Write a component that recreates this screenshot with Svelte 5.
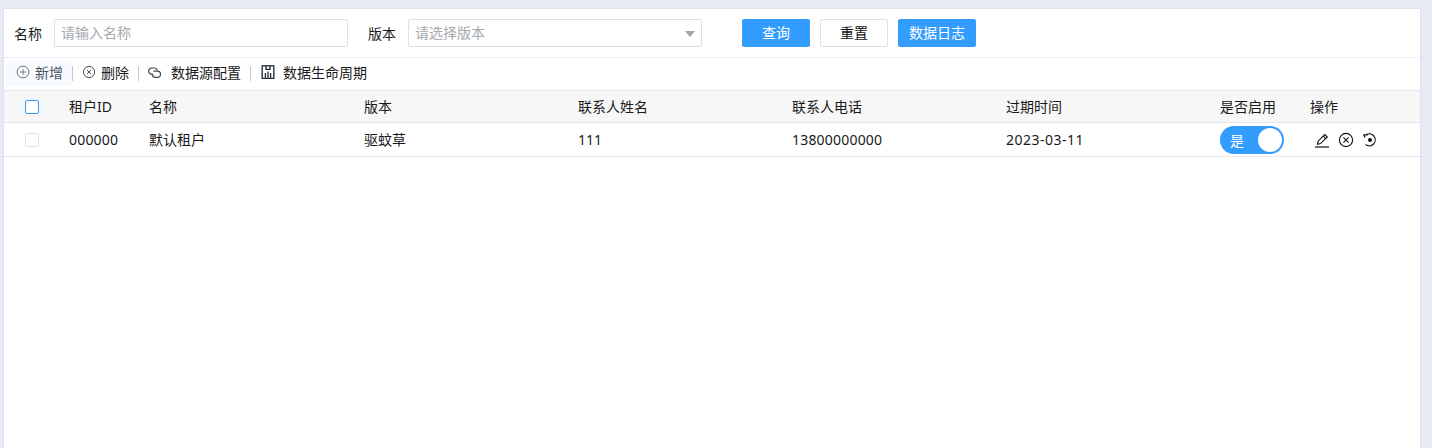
<script>
    const columns = [
        { key: 'id', title: '租户ID', width: 80, cls: 'num' },
        { key: 'name', title: '名称', width: 215, cls: '' },
        { key: 'version', title: '版本', width: 214, cls: '' },
        { key: 'contact', title: '联系人姓名', width: 214, cls: '' },
        { key: 'phone', title: '联系人电话', width: 214, cls: 'num' },
        { key: 'expire', title: '过期时间', width: 214, cls: 'date' }
    ];
    const rows = [
        { id: '000000', name: '默认租户', version: '驱蚊草', contact: '111', phone: '13800000000', expire: '2023-03-11' }
    ];
</script>

<div class="page">
    <div class="panel">
        <form class="search">
            <span class="label">名称</span>
            <div class="input name-input">请输入名称</div>
            <span class="label version-label">版本</span>
            <div class="input version-input">
                请选择版本
                <i class="caret"></i>
            </div>
            <button type="button" class="btn primary query">查询</button>
            <button type="button" class="btn reset">重置</button>
            <button type="button" class="btn primary log">数据日志</button>
        </form>

        <div class="toolbar">
            <button type="button" class="tool add">
                <svg width="14" height="14" viewBox="0 0 14 14" fill="none" stroke="#6f7680">
                    <circle cx="7" cy="7" r="5.9" />
                    <path d="M7 4.2v5.6M4.2 7h5.6" />
                </svg>
                <span class="grey">新增</span>
            </button>
            <i class="sep"></i>
            <button type="button" class="tool del">
                <svg width="14" height="14" viewBox="0 0 14 14" fill="none" stroke="#4a4f57">
                    <circle cx="7" cy="7" r="5.6" />
                    <path d="M5 5l4 4M9 5l-4 4" />
                </svg>
                <span>删除</span>
            </button>
            <i class="sep"></i>
            <button type="button" class="tool source">
                <svg width="14" height="14" viewBox="0 0 14 14" fill="none" stroke="#3f464f" stroke-width="1.2">
                    <path d="M5.2 9.4H4a3.2 3.2 0 0 1-.2-6.4h2.6a3.2 3.2 0 0 1 3 2.4" />
                    <path d="M5.4 6.2h4a3.1 3.1 0 0 1 0 6.2H7.2a3 3 0 0 1-2.8-2.6" />
                </svg>
                <span>数据源配置</span>
            </button>
            <i class="sep"></i>
            <button type="button" class="tool life">
                <svg width="14" height="14" viewBox="0 0 14 14" fill="none" stroke="#1d2733" stroke-width="1.3">
                    <rect x="1.2" y="0.8" width="11.6" height="12.6" />
                    <path d="M5 1v3.4h4V1M4.4 12.8V8M7 12.8V6.6M9.6 12.8V8" />
                </svg>
                <span>数据生命周期</span>
            </button>
        </div>

        <div class="row head">
            <div class="check-cell"><span class="check active"></span></div>
            {#each columns as col}
                <div class="cell" style="width: {col.width}px">{col.title}</div>
            {/each}
            <div class="cell enable">是否启用</div>
            <div class="cell">操作</div>
        </div>

        {#each rows as row}
            <div class="row body">
                <div class="check-cell"><span class="check"></span></div>
                {#each columns as col}
                    <div class="cell {col.cls}" style="width: {col.width}px">{row[col.key]}</div>
                {/each}
                <div class="cell enable">
                    <span class="switch">
                        <span>是</span>
                        <i class="knob"></i>
                    </span>
                </div>
                <div class="cell actions">
                    <svg width="16" height="16" viewBox="0 0 16 16" fill="none" stroke="#111" stroke-width="1.1">
                        <path d="M1 15h14" stroke-width="1.2" />
                        <path d="M3.5 12.2l.6-3L10.8 2.6l2.5 2.4-6.7 6.6z" />
                        <path d="M9.2 4.2l2.5 2.4" />
                    </svg>
                    <svg width="16" height="16" viewBox="0 0 16 16" fill="none" stroke="#111" stroke-width="1.1">
                        <circle cx="8" cy="8" r="6.6" />
                        <path d="M5.4 5.4l5.2 5.2M10.6 5.4l-5.2 5.2" />
                    </svg>
                    <svg width="16" height="16" viewBox="0 0 16 16" fill="none" stroke="#111" stroke-width="1.2">
                        <path d="M1.5 2.8h4.2M1.5 2.8l1.6 2.6M4 2.8A6 6 0 1 1 3.6 12.6" />
                        <circle cx="8" cy="8" r="2" fill="#111" stroke="none" />
                    </svg>
                </div>
            </div>
        {/each}
    </div>
</div>

<style>
:global(body) {
    margin: 0;
    background: #e6ebf3;
}

.page {
    height: 448px;
    padding: 9px 12px 0 4px;
    box-sizing: border-box;
    overflow: hidden;
    font-family: "Noto Sans", "Noto Sans CJK SC", sans-serif;
    font-size: 14px;
    color: #1a1a1a;
}

.panel {
    height: 439px;
    background: #fff;
    box-shadow: 0 0 0 1px #dfe3e9;
}

.search {
    display: flex;
    align-items: center;
    height: 49px;
    padding: 0 0 1px 10px;
    border-bottom: 1px dotted #dcdfe6;
    box-sizing: border-box;
}

.label {
    width: 40px;
    flex: none;
}

.version-label {
    margin-left: 20px;
}

.input {
    height: 28px;
    line-height: 26px;
    padding: 0 6px;
    box-sizing: border-box;
    border: 1px solid #dcdfe6;
    border-radius: 2px;
    color: #a6a9ae;
    position: relative;
}

.name-input {
    width: 294px;
}

.version-input {
    width: 294px;
}

.caret {
    position: absolute;
    right: 6px;
    top: 11px;
    border: 5px solid transparent;
    border-top: 6px solid #a0a4ab;
    border-bottom: 0;
}

.btn {
    height: 28px;
    border: 1px solid #dcdfe6;
    border-radius: 2px;
    background: #fff;
    font: inherit;
    color: #111;
    padding: 0 0 2px;
}

.primary {
    background: #339dff;
    border-color: #339dff;
    color: #fff;
}

.query {
    width: 68px;
    margin-left: 40px;
}

.reset {
    width: 68px;
    margin-left: 10px;
}

.log {
    width: 78px;
    margin-left: 10px;
}

.toolbar {
    display: flex;
    align-items: center;
    height: 32px;
    padding: 0 0 2px 2px;
    box-sizing: border-box;
}

.tool {
    display: flex;
    align-items: center;
    height: 25px;
    border: 0;
    padding: 0 0 2px;
    background: none;
    font: inherit;
    color: #1a1a1a;
}

.tool svg {
    flex: none;
}

.add {
    width: 66px;
    background: #f7fbff;
    border-radius: 2px;
    padding-left: 10px;
    box-sizing: border-box;
    gap: 5px;
}

.del {
    padding: 0 9px 2px;
    gap: 5px;
}

.source {
    padding: 0 9px 2px;
    gap: 9px;
}

.life {
    padding-left: 10px;
    gap: 8px;
}

.grey {
    color: #4a5560;
}

.sep {
    width: 1px;
    height: 15px;
    background: #c4c7cc;
}

.row {
    display: flex;
    align-items: center;
    box-sizing: border-box;
    border-bottom: 1px solid #e4e6ea;
}

.head {
    height: 33px;
    padding-bottom: 2px;
    background: #f7f7f8;
    border-top: 1px solid #e4e6ea;
}

.head .check-cell {
    padding-top: 3px;
}

.body {
    height: 34px;
    padding-bottom: 1px;
}

.body .check-cell {
    padding-top: 1px;
}

.body .enable,
.body .actions {
    padding-top: 2px;
}

.check-cell {
    width: 65px;
    flex: none;
    padding-left: 21px;
    box-sizing: border-box;
    display: flex;
}

.check {
    width: 14px;
    height: 14px;
    box-sizing: border-box;
    border: 1px solid #e0e2e8;
    border-radius: 2px;
    background: #fff;
}

.check.active {
    border-color: #339dff;
}

.cell {
    flex: none;
    box-sizing: border-box;
}

.num {
    letter-spacing: 0.2px;
}

.date {
    letter-spacing: 0.5px;
}

.enable {
    width: 90px;
}

.switch {
    display: flex;
    align-items: center;
    justify-content: space-between;
    width: 64px;
    height: 28px;
    box-sizing: border-box;
    padding: 0 2px 0 10px;
    border-radius: 14px;
    background: #339dff;
    color: #fff;
}

.knob {
    width: 24px;
    height: 24px;
    border-radius: 50%;
    background: #fff;
}

.actions {
    display: flex;
    align-items: center;
    gap: 8px;
    padding-left: 4px;
}
</style>
